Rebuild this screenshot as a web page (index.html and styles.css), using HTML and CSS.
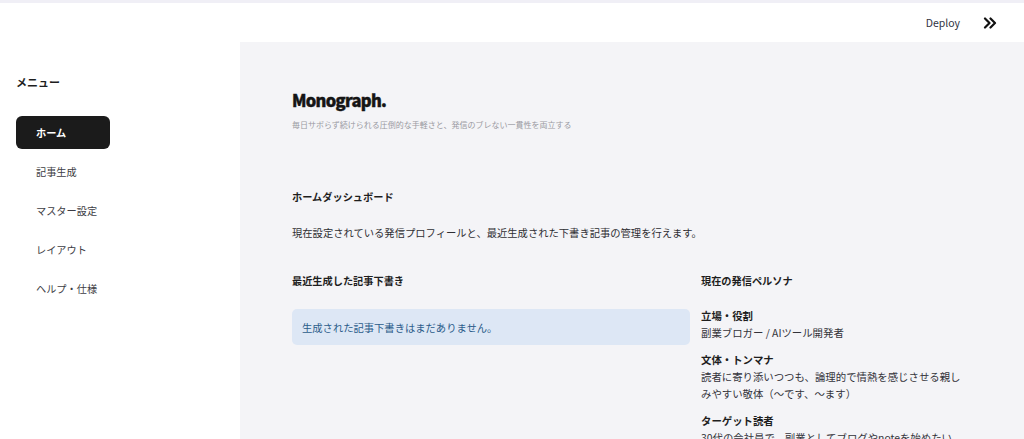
FILE: index.html
```html
<!DOCTYPE html>
<html lang="ja">
<head>
    <meta charset="UTF-8">
    <meta name="viewport" content="width=device-width, initial-scale=1.0">
    <title>Monograph.</title>
    <link rel="stylesheet" href="styles.css">
</head>
<body>
    <div class="topline"></div>
    <header class="header">
        <span class="deploy">Deploy</span>
        <svg class="chevrons" width="14" height="12" viewBox="0 0 14 12">
            <path d="M2 1.5 L6.5 6 L2 10.5 M7.5 1.5 L12 6 L7.5 10.5" fill="none" stroke="#111" stroke-width="2.2" stroke-linecap="round" stroke-linejoin="round"/>
        </svg>
    </header>
    <div class="layout">
        <aside class="sidebar">
            <div class="menu-title">メニュー</div>
            <nav class="nav">
                <div class="nav-item active">ホーム</div>
                <div class="nav-item">記事生成</div>
                <div class="nav-item">マスター設定</div>
                <div class="nav-item">レイアウト</div>
                <div class="nav-item">ヘルプ・仕様</div>
            </nav>
        </aside>
        <main class="main">
            <h1 class="brand">Monograph.</h1>
            <p class="tagline">毎日サボらず続けられる圧倒的な手軽さと、発信のブレない一貫性を両立する</p>
            <h2 class="section-title">ホームダッシュボード</h2>
            <p class="desc">現在設定されている発信プロフィールと、最近生成された下書き記事の管理を行えます。</p>
            <div class="columns">
                <section class="col-left">
                    <h3 class="col-title">最近生成した記事下書き</h3>
                    <div class="info">生成された記事下書きはまだありません。</div>
                </section>
                <section class="col-right">
                    <h3 class="col-title">現在の発信ペルソナ</h3>
                    <div class="persona">
                        <div class="label">立場・役割</div>
                        <div class="value">副業ブロガー / AIツール開発者</div>
                        <div class="label">文体・トンマナ</div>
                        <div class="value">読者に寄り添いつつも、論理的で情熱を感じさせる親しみやすい敬体（〜です、〜ます）</div>
                        <div class="label">ターゲット読者</div>
                        <div class="value">30代の会社員で、副業としてブログやnoteを始めたい</div>
                    </div>
                </section>
            </div>
        </main>
    </div>
</body>
</html>
```

FILE: styles.css
```css
  * {
      box-sizing: border-box;
  }
  body {
      margin: 0;
      height: 439px;
      overflow: hidden;
      font-family: "Noto Sans CJK JP", "Noto Sans", sans-serif;
      color: #262730;
      background: #ffffff;
  }
  .topline {
      height: 3px;
      background: #f0eff6;
  }
  .header {
      height: 39px;
      display: flex;
      align-items: center;
      justify-content: flex-end;
      padding-right: 27px;
      gap: 23px;
  }
  .deploy {
      font-size: 10.5px;
      color: #31333f;
      font-family: "Noto Sans CJK JP", "Noto Sans", sans-serif;
  }
  .chevrons {
      display: block;
  }
  .layout {
      display: flex;
      height: 397px;
  }
  .sidebar {
      width: 240px;
      flex-shrink: 0;
      padding: 32px 16px 0 16px;
  }
  .menu-title {
      font-size: 11px;
      font-weight: 700;
      line-height: 16px;
      color: #1e1e1e;
  }
  .nav {
      margin-top: 26px;
      display: flex;
      flex-direction: column;
      gap: 6px;
  }
  .nav-item {
      width: 94px;
      height: 33px;
      display: flex;
      align-items: center;
      padding-left: 20px;
      font-size: 10.2px;
      color: #3d3d44;
      border-radius: 6px;
  }
  .nav-item.active {
      background: #1b1b1b;
      color: #ffffff;
      font-weight: 700;
  }
  .main {
      flex: 1;
      background: #f4f4f7;
      padding: 47px 52px 0 52px;
  }
  .brand {
      margin: 0;
      font-family: "Noto Sans CJK JP", sans-serif;
      font-size: 16.5px;
      font-weight: 900;
      line-height: 22px;
      letter-spacing: -0.7px;
      -webkit-text-stroke: 0.4px #151515;
      color: #151515;
  }
  .tagline {
      margin: 8px 0 0 0;
      font-size: 8px;
      line-height: 12px;
      color: #9a9aa2;
  }
  .section-title {
      margin: 58px 0 0 0;
      font-size: 10.2px;
      font-weight: 700;
      line-height: 16px;
      color: #1e1e1e;
  }
  .desc {
      margin: 20px 0 0 0;
      font-size: 10.3px;
      line-height: 16px;
      color: #2e2e33;
  }
  .columns {
      margin-top: 32px;
      display: flex;
      gap: 11px;
  }
  .col-left {
      width: 398px;
  }
  .col-right {
      width: 265px;
  }
  .col-title {
      margin: 0;
      font-size: 10.2px;
      font-weight: 700;
      line-height: 16px;
      color: #1e1e1e;
  }
  .info {
      margin-top: 20px;
      height: 36px;
      display: flex;
      align-items: center;
      padding-left: 10px;
      background: #dde7f5;
      border-radius: 5px;
      font-size: 10.3px;
      color: #2b5c8a;
  }
  .persona {
      margin-top: 19px;
  }
  .label {
      font-size: 10.4px;
      font-weight: 700;
      line-height: 16px;
      color: #1e1e1e;
  }
  .value {
      font-size: 10.4px;
      line-height: 17.5px;
      color: #33333a;
      margin-bottom: 10px;
  }
```
